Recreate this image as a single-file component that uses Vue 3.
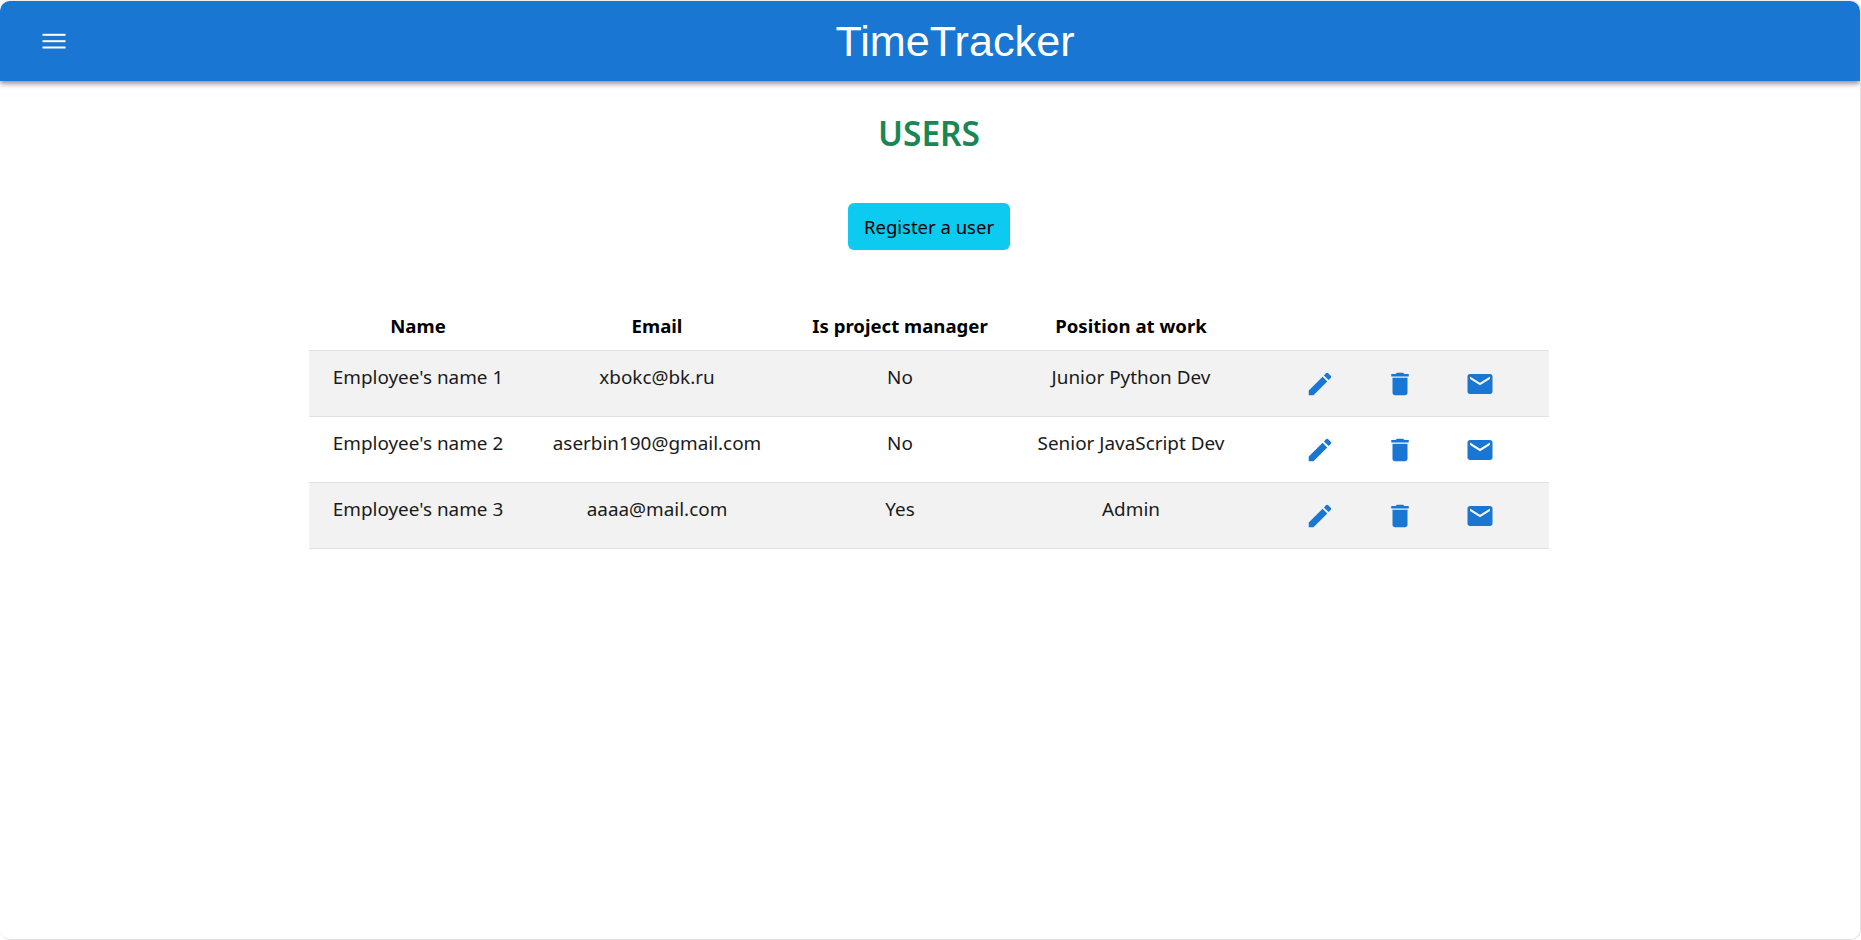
<template>
  <div class="window">
    <header class="app-bar">
      <button class="menu-btn" aria-label="menu">
        <svg width="24" height="16" viewBox="0 0 24 16" fill="#fff">
          <rect x="0.5" y="0.8" width="23" height="2" />
          <rect x="0.5" y="7.2" width="23" height="2" />
          <rect x="0.5" y="13.5" width="23" height="2" />
        </svg>
      </button>
      <div class="app-title">TimeTracker</div>
    </header>

    <main class="content">
      <h2 class="page-title">USERS</h2>
      <button class="register-btn">Register a user</button>

      <table class="users-table">
        <colgroup>
          <col style="width: 218px" />
          <col style="width: 260px" />
          <col style="width: 226px" />
          <col style="width: 236px" />
          <col style="width: 300px" />
        </colgroup>
        <thead>
          <tr>
            <th>Name</th>
            <th>Email</th>
            <th>Is project manager</th>
            <th>Position at work</th>
            <th></th>
          </tr>
        </thead>
        <tbody>
          <tr v-for="user in users" :key="user.email">
            <td>{{ user.name }}</td>
            <td>{{ user.email }}</td>
            <td>{{ user.manager }}</td>
            <td>{{ user.position }}</td>
            <td class="actions">
              <svg class="icon" viewBox="0 0 24 24"><path d="M3 17.25V21h3.75L17.81 9.94l-3.75-3.75L3 17.25zM20.71 7.04c.39-.39.39-1.02 0-1.41l-2.34-2.34a.9959.9959 0 0 0-1.41 0l-1.83 1.83 3.75 3.75 1.83-1.83z" /></svg>
              <svg class="icon" viewBox="0 0 24 24"><path d="M6 19c0 1.1.9 2 2 2h8c1.1 0 2-.9 2-2V7H6v12zM19 4h-3.5l-1-1h-5l-1 1H5v2h14V4z" /></svg>
              <svg class="icon" viewBox="0 0 24 24"><path d="M20 4H4c-1.1 0-1.99.9-1.99 2L2 18c0 1.1.9 2 2 2h16c1.1 0 2-.9 2-2V6c0-1.1-.9-2-2-2zm0 4-8 5-8-5V6l8 5 8-5v2z" /></svg>
            </td>
          </tr>
        </tbody>
      </table>
    </main>
  </div>
</template>

<script setup>
const users = [
  { name: "Employee's name 1", email: 'xbokc@bk.ru', manager: 'No', position: 'Junior Python Dev' },
  { name: "Employee's name 2", email: 'aserbin190@gmail.com', manager: 'No', position: 'Senior JavaScript Dev' },
  { name: "Employee's name 3", email: 'aaaa@mail.com', manager: 'Yes', position: 'Admin' }
]
</script>

<style>
html,
body {
  margin: 0;
  background: #fff;
}
</style>

<style scoped>
.window {
  box-sizing: border-box;
  height: 940px;
  padding-top: 1px;
  border-right: 1px solid #e2e2e2;
  border-bottom: 1px solid #e2e2e2;
  border-radius: 10px;
  font-family: "Noto Sans", "Open Sans", sans-serif;
  color: #1a1a1a;
  overflow: hidden;
}

.app-bar {
  display: flex;
  align-items: center;
  height: 80px;
  padding: 0 24px 0 34px;
  background: #1976d2;
  border-radius: 10px 10px 0 0;
  box-shadow: 0 2px 4px -1px rgba(0, 0, 0, 0.3), 0 4px 5px rgba(0, 0, 0, 0.18), 0 1px 10px rgba(0, 0, 0, 0.12);
}

.menu-btn {
  display: flex;
  align-items: center;
  justify-content: center;
  width: 40px;
  height: 40px;
  padding: 0;
  background: none;
  border: none;
}

.app-title {
  flex: 1;
  text-align: center;
  font-family: "Liberation Sans", Arial, sans-serif;
  font-size: 43.2px;
  line-height: 79px;
  color: #fff;
}

.content {
  display: flex;
  flex-direction: column;
  align-items: center;
  padding: 28px 2px 0 0;
}

.page-title {
  margin: 0 0 46px;
  font-size: 33.5px;
  line-height: 48px;
  font-weight: 600;
  color: #198754;
}

.register-btn {
  width: 162px;
  height: 47px;
  padding: 0;
  background: #0dcaf0;
  border: none;
  border-radius: 6px;
  font-family: inherit;
  font-size: 18.5px;
  color: #000;
}

.users-table {
  width: 1240px;
  margin-top: 51px;
  border-collapse: collapse;
  table-layout: fixed;
  font-size: 18.9px;
  text-align: center;
}

.users-table th {
  height: 49px;
  padding: 0;
  font-size: 18.6px;
  font-weight: 700;
  color: #000;
  border-bottom: 1px solid #dee2e6;
}

.users-table td {
  height: 66px;
  padding: 13px 0 0;
  box-sizing: border-box;
  vertical-align: top;
  border-bottom: 1px solid #dee2e6;
}

.users-table tbody tr:nth-child(odd) td {
  background: #f2f2f2;
}

.users-table td.actions {
  padding: 0 29px 0 31px;
  vertical-align: middle;
}

.actions {
  line-height: 0;
}

.icon {
  width: 30px;
  height: 30px;
  margin: 0 25px;
  fill: #1976d2;
}
</style>
